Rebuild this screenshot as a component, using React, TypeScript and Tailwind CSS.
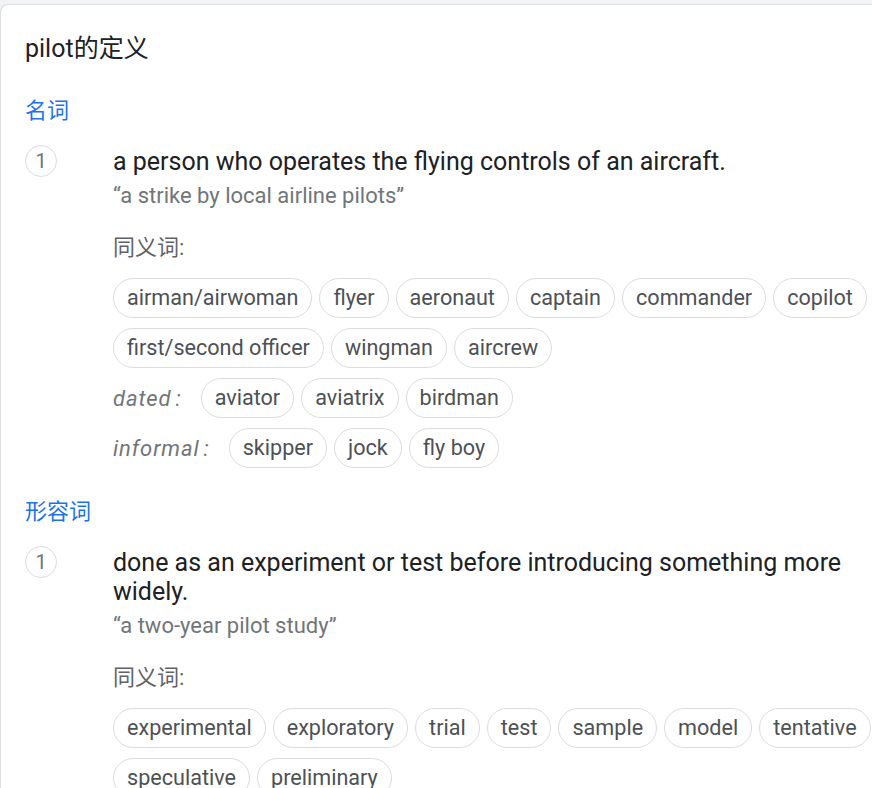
import React from 'react';

type Sense = {
    definition: string;
    example: string;
    synonyms: string[];
    labelled?: { label: string; words: string[] }[];
};

const font = { fontFamily: 'Roboto, "Noto Sans CJK SC", sans-serif' };

const nounSense: Sense = {
    definition: 'a person who operates the flying controls of an aircraft.',
    example: '“a strike by local airline pilots”',
    synonyms: ['airman/airwoman', 'flyer', 'aeronaut', 'captain', 'commander', 'copilot', 'first/second officer', 'wingman', 'aircrew'],
    labelled: [
        { label: 'dated', words: ['aviator', 'aviatrix', 'birdman'] },
        { label: 'informal', words: ['skipper', 'jock', 'fly boy'] }
    ]
};

const adjSense: Sense = {
    definition: 'done as an experiment or test before introducing something more widely.',
    example: '“a two-year pilot study”',
    synonyms: ['experimental', 'exploratory', 'trial', 'test', 'sample', 'model', 'tentative', 'speculative', 'preliminary']
};

const Chip: React.FC<{ word: string }> = ({ word }) => (
    <span className="h-[40px] px-[13px] flex items-center rounded-full border border-[#dadce0] text-[21.6px] text-[#4d5156] whitespace-nowrap">
        {word}
    </span>
);

const SenseBlock: React.FC<{ sense: Sense }> = ({ sense }) => (
    <div className="grid grid-cols-[88px_1fr] mt-[20px]">
        <div>
            <div className="w-[32px] h-[32px] rounded-full border border-[#dadce0] flex items-center justify-center text-[20px] text-[#70757a]">1</div>
        </div>
        <div>
            <div className="text-[25px] leading-[29px] text-[#202124] mt-[2px]">{sense.definition}</div>
            <div className="text-[22px] leading-[28px] text-[#70757a] mt-[6px]">{sense.example}</div>
            <div className="text-[22px] leading-[28px] text-[#5f6368] mt-[24px]">同义词:</div>
            <div className="flex flex-wrap gap-x-[7px] gap-y-[10px] mt-[16px]">
                {sense.synonyms.map((w) => <Chip key={w} word={w} />)}
            </div>
            {sense.labelled?.map((row) => (
                <div key={row.label} className="flex items-center gap-[7px] mt-[10px]">
                    <span className="italic text-[22px] tracking-[0.9px] text-[#70757a] mr-[12px]">
                        {row.label}<span className="ml-[4px]">:</span>
                    </span>
                    {row.words.map((w) => <Chip key={w} word={w} />)}
                </div>
            ))}
        </div>
    </div>
);

export default function App() {
    return (
        <div className="w-full h-[788px] overflow-hidden bg-[#f1f3f4] pt-[4px]" style={font}>
            <div className="w-[920px] h-full bg-white border-t border-l border-[#dadce0] rounded-tl-[8px] pl-[24px] pr-[25px] pt-[28px]">
                <h1 className="text-[25px] leading-[32px] text-[#202124]">pilot的定义</h1>
                <div className="text-[22px] leading-[28px] text-[#1a73e8] mt-[32px]">名词</div>
                <SenseBlock sense={nounSense} />
                <div className="text-[22px] leading-[28px] text-[#1a73e8] mt-[30px]">形容词</div>
                <SenseBlock sense={adjSense} />
            </div>
        </div>
    );
}
